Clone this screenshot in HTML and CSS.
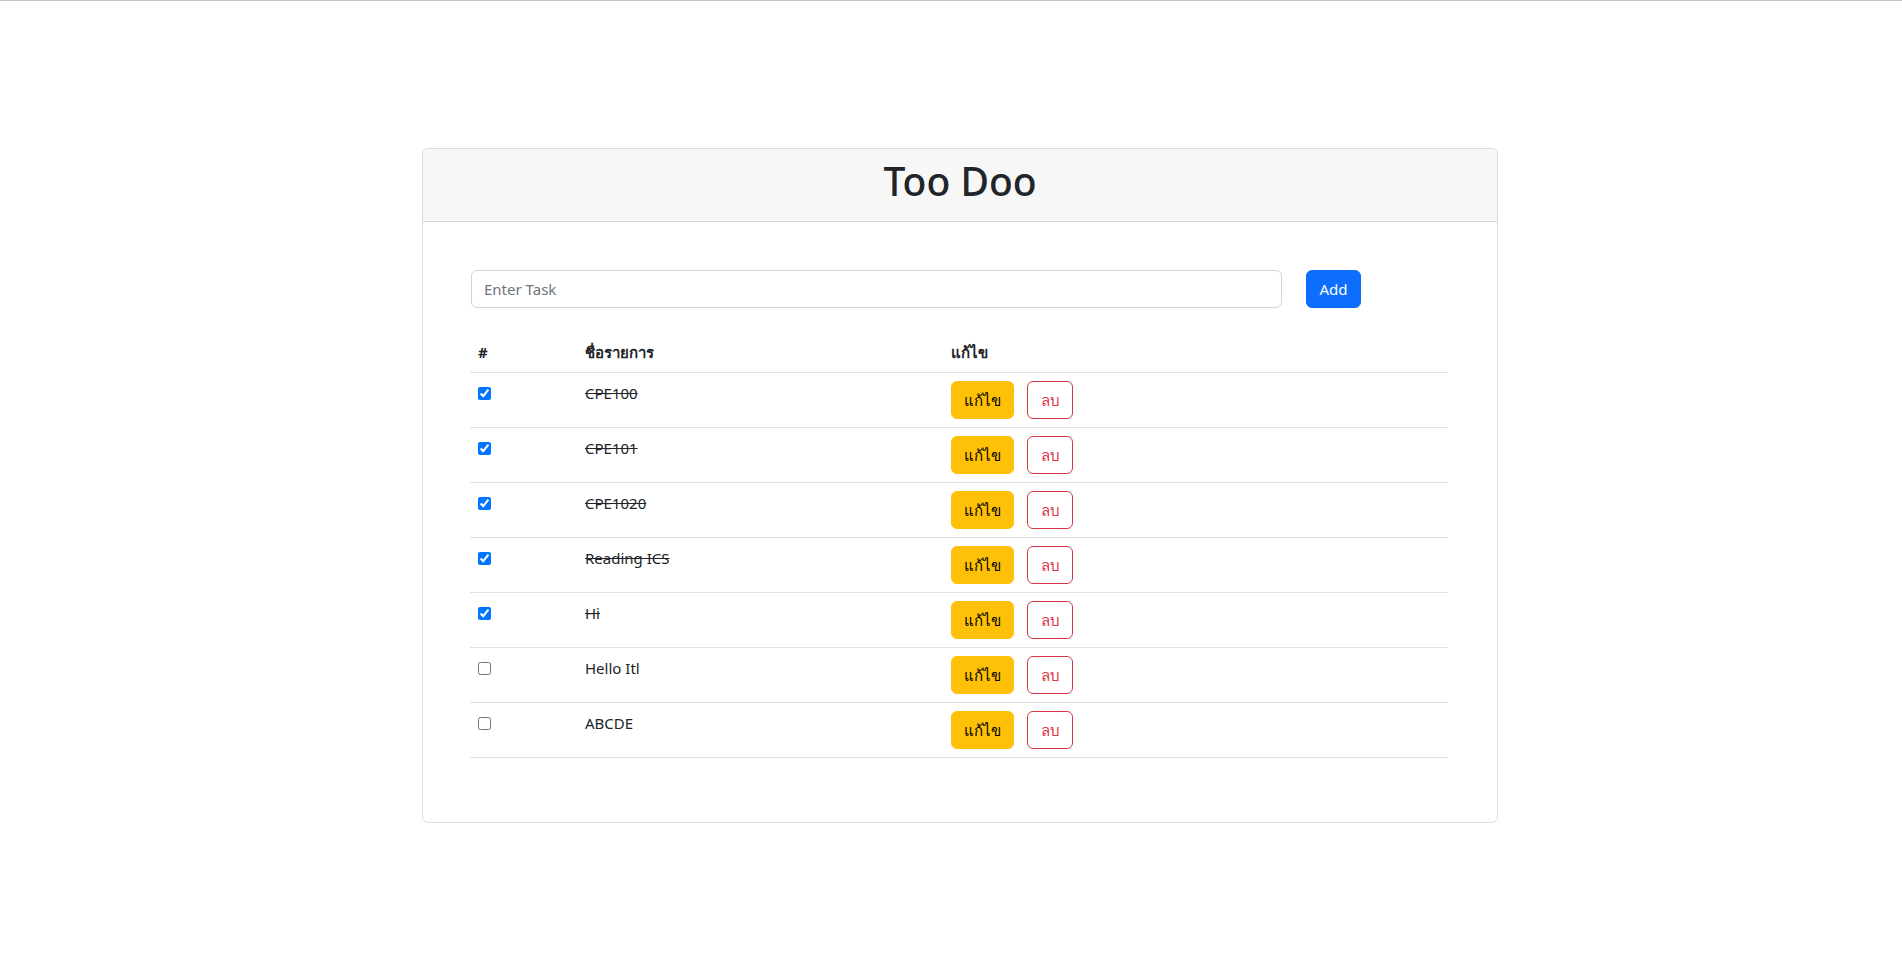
FILE: index.html
```html
<!DOCTYPE html>
<html lang="th">
<head>
<meta charset="utf-8">
<title>Too Doo</title>
<link rel="stylesheet" href="styles.css">
</head>
<body>
<main class="page">
  <section class="card">
    <header class="card-header">
      <h1 class="title">Too Doo</h1>
    </header>
    <div class="card-body">
      <form class="add-row">
        <input class="task-input" type="text" placeholder="Enter Task">
        <button class="btn btn-primary" type="button">Add</button>
      </form>
      <table class="task-table">
        <thead>
          <tr>
            <th class="col-check">#</th>
            <th class="col-name">ชื่อรายการ</th>
            <th class="col-actions">แก้ไข</th>
          </tr>
        </thead>
        <tbody>
          <tr>
            <td><input class="check" type="checkbox" checked></td>
            <td class="done">CPE100</td>
            <td><div class="actions"><button class="btn btn-warning" type="button">แก้ไข</button><button class="btn btn-outline-danger" type="button">ลบ</button></div></td>
          </tr>
          <tr>
            <td><input class="check" type="checkbox" checked></td>
            <td class="done">CPE101</td>
            <td><div class="actions"><button class="btn btn-warning" type="button">แก้ไข</button><button class="btn btn-outline-danger" type="button">ลบ</button></div></td>
          </tr>
          <tr>
            <td><input class="check" type="checkbox" checked></td>
            <td class="done">CPE1020</td>
            <td><div class="actions"><button class="btn btn-warning" type="button">แก้ไข</button><button class="btn btn-outline-danger" type="button">ลบ</button></div></td>
          </tr>
          <tr>
            <td><input class="check" type="checkbox" checked></td>
            <td class="done">Reading ICS</td>
            <td><div class="actions"><button class="btn btn-warning" type="button">แก้ไข</button><button class="btn btn-outline-danger" type="button">ลบ</button></div></td>
          </tr>
          <tr>
            <td><input class="check" type="checkbox" checked></td>
            <td class="done">Hi</td>
            <td><div class="actions"><button class="btn btn-warning" type="button">แก้ไข</button><button class="btn btn-outline-danger" type="button">ลบ</button></div></td>
          </tr>
          <tr>
            <td><input class="check" type="checkbox"></td>
            <td>Hello Itl</td>
            <td><div class="actions"><button class="btn btn-warning" type="button">แก้ไข</button><button class="btn btn-outline-danger" type="button">ลบ</button></div></td>
          </tr>
          <tr>
            <td><input class="check" type="checkbox"></td>
            <td>ABCDE</td>
            <td><div class="actions"><button class="btn btn-warning" type="button">แก้ไข</button><button class="btn btn-outline-danger" type="button">ลบ</button></div></td>
          </tr>
        </tbody>
      </table>
    </div>
  </section>
</main>
</body>
</html>
```
FILE: styles.css
```css
* { box-sizing: border-box; }

html, body {
  margin: 0;
  padding: 0;
  background: #ffffff;
}

body {
  border-top: 1px solid #c6c4cc;
  font-family: "Noto Sans", "Open Sans", sans-serif;
  font-size: 16px;
  line-height: 24px;
  color: #212529;
}

.page {
  padding: 147px 0 0 422px;
}

.card {
  width: 1076px;
  border: 1px solid #dcdcdc;
  border-radius: 6px;
  overflow: hidden;
  background: #fff;
}

.card-header {
  background: #f7f7f7;
  border-bottom: 1px solid #d6d6d6;
  padding: 8px 16px;
  text-align: center;
}

.title {
  margin: 0 0 8px;
  font-size: 39px;
  line-height: 48px;
  font-weight: 500;
  color: #212529;
}

.card-body {
  padding: 48px;
}

.add-row {
  display: flex;
  align-items: center;
  gap: 24px;
  margin: 0 0 24px;
}

.task-input {
  width: 811px;
  height: 38px;
  padding: 6px 12px;
  border: 1px solid #ced4da;
  border-radius: 6px;
  font: inherit;
  font-size: 15px;
  color: #212529;
}

.task-input::placeholder {
  color: #6c757d;
}

.btn {
  display: inline-block;
  height: 38px;
  padding: 6px 12px;
  border: 1px solid transparent;
  border-radius: 6px;
  font: inherit;
  font-size: 15px;
  line-height: 24px;
  cursor: pointer;
  background: transparent;
}

.btn-primary {
  width: 55px;
  background: #0d6efd;
  border-color: #0d6efd;
  color: #fff;
}

.btn-warning {
  width: 63px;
  padding: 6px 0;
  background: #ffc107;
  border-color: #ffc107;
  color: #000;
}

.btn-outline-danger {
  width: 46px;
  padding: 6px 0;
  border-color: #dc3545;
  color: #dc3545;
}

.task-table {
  width: 978px;
  margin: 0 0 16px -1px;
  border-collapse: collapse;
  table-layout: fixed;
}

.task-table th,
.task-table td {
  padding: 8px;
  text-align: left;
  vertical-align: top;
  border-bottom: 1px solid #dee2e6;
}

.task-table th {
  font-weight: 700;
  font-size: 15px;
}

.col-check { width: 107px; }
.col-name { width: 366px; }

.task-table td {
  font-size: 15px;
}

.done {
  text-decoration: line-through;
}

.check {
  display: block;
  width: 13px;
  height: 13px;
  margin: 6px 0 0;
}

.actions {
  display: flex;
  gap: 13px;
}
```
